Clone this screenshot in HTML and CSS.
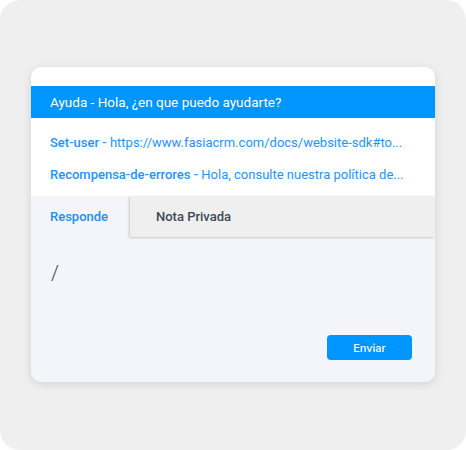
FILE: index.html
```html
<!DOCTYPE html>
<html>
<head>
<meta charset="utf-8">
<link rel="stylesheet" href="styles.css">
</head>
<body>
<div class="page">
  <div class="card">
    <div class="card-top"></div>
    <div class="banner">Ayuda - Hola, ¿en que puedo ayudarte?</div>
    <div class="list">
      <div class="item"><span class="key">Set-user -</span> https://www.fasiacrm.com/docs/website-sdk#to...</div>
      <div class="item"><span class="key">Recompensa-de-errores -</span> Hola, consulte nuestra política de...</div>
    </div>
    <div class="tabs">
      <div class="tab active">Responde</div>
      <div class="tab other">Nota Privada</div>
    </div>
    <div class="editor">
      <div class="slash">/</div>
      <div class="actions"><button class="send">Enviar</button></div>
    </div>
  </div>
</div>
</body>
</html>
```
FILE: styles.css
```css
html, body { margin: 0; padding: 0; background: #ffffff; }
body { font-family: Roboto, "Noto Sans", sans-serif; }
.page {
  width: 466px; height: 450px; box-sizing: border-box;
  background: #efefef; border-radius: 20px;
  padding: 67px 31px 0 31px;
}
.card {
  width: 404px; height: 315px; background: #f4f5fa;
  border-radius: 10px; overflow: hidden;
  box-shadow: 0 2px 10px rgba(0,0,0,0.12);
  display: flex; flex-direction: column;
}
.card-top { height: 19px; background: #fff; }
.banner {
  height: 32px; background: #0095ff; color: #fff;
  font-size: 13.5px; line-height: 32px; padding-left: 19px;
}
.list { background: #fff; height: 78px; padding: 16px 0 0 19px; box-sizing: border-box; display: flex; flex-direction: column; gap: 14px; }
.item { font-size: 13px; line-height: 18px; color: #1f93ff; white-space: nowrap; }
.key { font-weight: 500; }
.tabs { display: flex; height: 41px; background: #fff; }
.tab { font-size: 13px; font-weight: 500; line-height: 41px; }
.tab.active { width: 99px; padding-left: 19px; box-sizing: border-box; color: #1f8ef5; background: #f4f5fa; }
.tab.other { flex: 1; padding-left: 26px; color: #3c4858; background: #efefef; box-shadow: -1px 1px 2px rgba(0,0,0,0.18); position: relative; }
.editor { flex: 1; position: relative; display: flex; flex-direction: column; padding: 24px 23px 22px 20px; }
.slash { font-size: 20px; font-weight: 300; color: #3c4858; line-height: 24px; flex: 1; }
.actions { display: flex; justify-content: flex-end; }
.send {
  width: 85px; height: 25px; border: none; border-radius: 4px;
  background: #0095ff; color: #fff; font-family: Inter, sans-serif; font-size: 11px; font-weight: 500;
}
```
